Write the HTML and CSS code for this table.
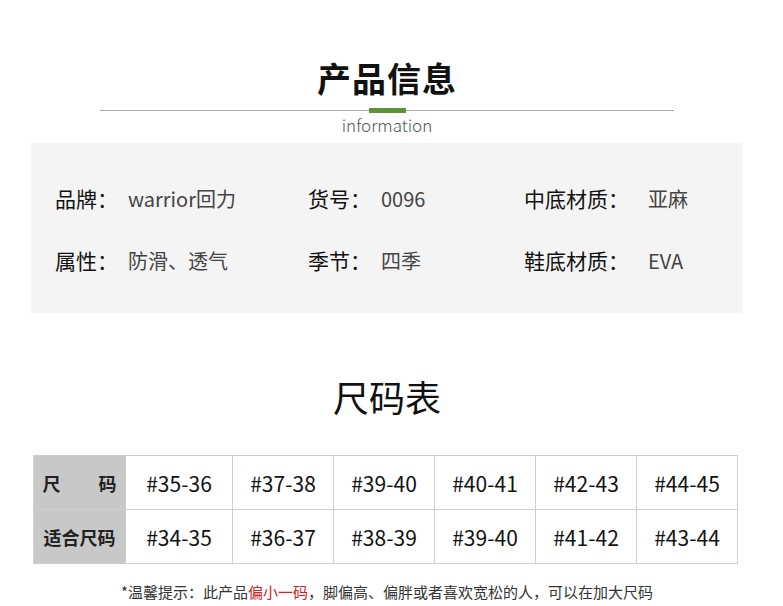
FILE: index.html
```html
<!DOCTYPE html>
<html lang="zh">
<head>
<meta charset="utf-8">
<link rel="stylesheet" href="styles.css">
</head>
<body>
<div class="page">
  <header class="head">
    <h1 class="title">产品信息</h1>
    <div class="divider"><span class="accent"></span></div>
    <div class="sub">information</div>
  </header>

  <section class="info">
    <div class="item c1"><span class="lab">品牌：</span><span class="val">warrior回力</span></div>
    <div class="item c2"><span class="lab">货号：</span><span class="val">0096</span></div>
    <div class="item c3"><span class="lab">中底材质：</span><span class="val">亚麻</span></div>
    <div class="item c1"><span class="lab">属性：</span><span class="val">防滑、透气</span></div>
    <div class="item c2"><span class="lab">季节：</span><span class="val">四季</span></div>
    <div class="item c3"><span class="lab">鞋底材质：</span><span class="val">EVA</span></div>
  </section>

  <h2 class="size-title">尺码表</h2>

  <table class="sizes">
    <colgroup>
      <col class="w-head"><col class="w-first"><col class="w-col"><col class="w-col"><col class="w-col"><col class="w-col"><col class="w-col">
    </colgroup>
    <tr>
      <th class="rowhead spread"><span>尺</span><span>码</span></th>
      <td>#35-36</td><td>#37-38</td><td>#39-40</td><td>#40-41</td><td>#42-43</td><td>#44-45</td>
    </tr>
    <tr>
      <th class="rowhead">适合尺码</th>
      <td>#34-35</td><td>#36-37</td><td>#38-39</td><td>#39-40</td><td>#41-42</td><td>#43-44</td>
    </tr>
  </table>

  <p class="note">*温馨提示：此产品<span class="red">偏小一码</span>，脚偏高、偏胖或者喜欢宽松的人，可以在加大尺码</p>
</div>
</body>
</html>
```

FILE: styles.css
```css
html, body {
  margin: 0;
  padding: 0;
  background: #ffffff;
}
body {
  font-family: "Noto Sans CJK SC", "Noto Sans", sans-serif;
  color: #111;
}
.page {
  width: 774px;
  padding-top: 58px;
}
.head {
  display: flex;
  flex-direction: column;
  align-items: center;
}
.title {
  margin: 0;
  font-size: 34px;
  line-height: 40px;
  font-weight: 700;
  color: #111;
  letter-spacing: 1px;
}
.divider {
  margin-top: 12px;
  width: 574px;
  height: 1px;
  background: #a8a8a8;
  display: flex;
  justify-content: center;
  align-items: center;
}
.accent {
  display: block;
  width: 37px;
  height: 5px;
  background: #5f9235;
}
.sub {
  margin-top: 3px;
  font-size: 17px;
  line-height: 22px;
  color: #555;
  font-weight: 300;
}
.info {
  margin: 7px 0 0 31px;
  width: 712px;
  height: 170px;
  box-sizing: border-box;
  background: #f4f4f4;
  padding: 39px 0 0 24px;
  display: grid;
  grid-template-columns: 253px 216px 1fr;
  grid-auto-rows: 32px;
  row-gap: 30px;
  align-items: center;
}
.item {
  display: flex;
  align-items: center;
  font-size: 21px;
  white-space: nowrap;
}
.lab {
  color: #111;
  width: 73px;
}
.c3 .lab {
  width: 124px;
}
.val {
  color: #444;
  font-size: 20px;
}
.size-title {
  margin: 58px 0 0;
  text-align: center;
  font-size: 36px;
  line-height: 50px;
  font-weight: 400;
  color: #111;
}
.sizes {
  margin: 34px 0 0 33px;
  width: 705px;
  border-collapse: collapse;
  table-layout: fixed;
}
.w-head { width: 92px; }
.w-first { width: 107px; }
.w-col { width: 101px; }
.sizes th, .sizes td {
  border: 1px solid #cfcfcf;
  height: 53px;
  padding: 0;
  text-align: center;
  font-size: 21px;
  font-weight: 400;
  color: #111;
}
.sizes .rowhead {
  background: #c8c8c8;
  font-size: 18px;
  font-weight: 700;
  color: #222;
}
.sizes .spread span:first-child {
  margin-right: 38px;
}
.note {
  margin: 18px 0 0;
  text-align: center;
  font-size: 15px;
  line-height: 20px;
  color: #333;
}
.red {
  color: #d42020;
}
```
